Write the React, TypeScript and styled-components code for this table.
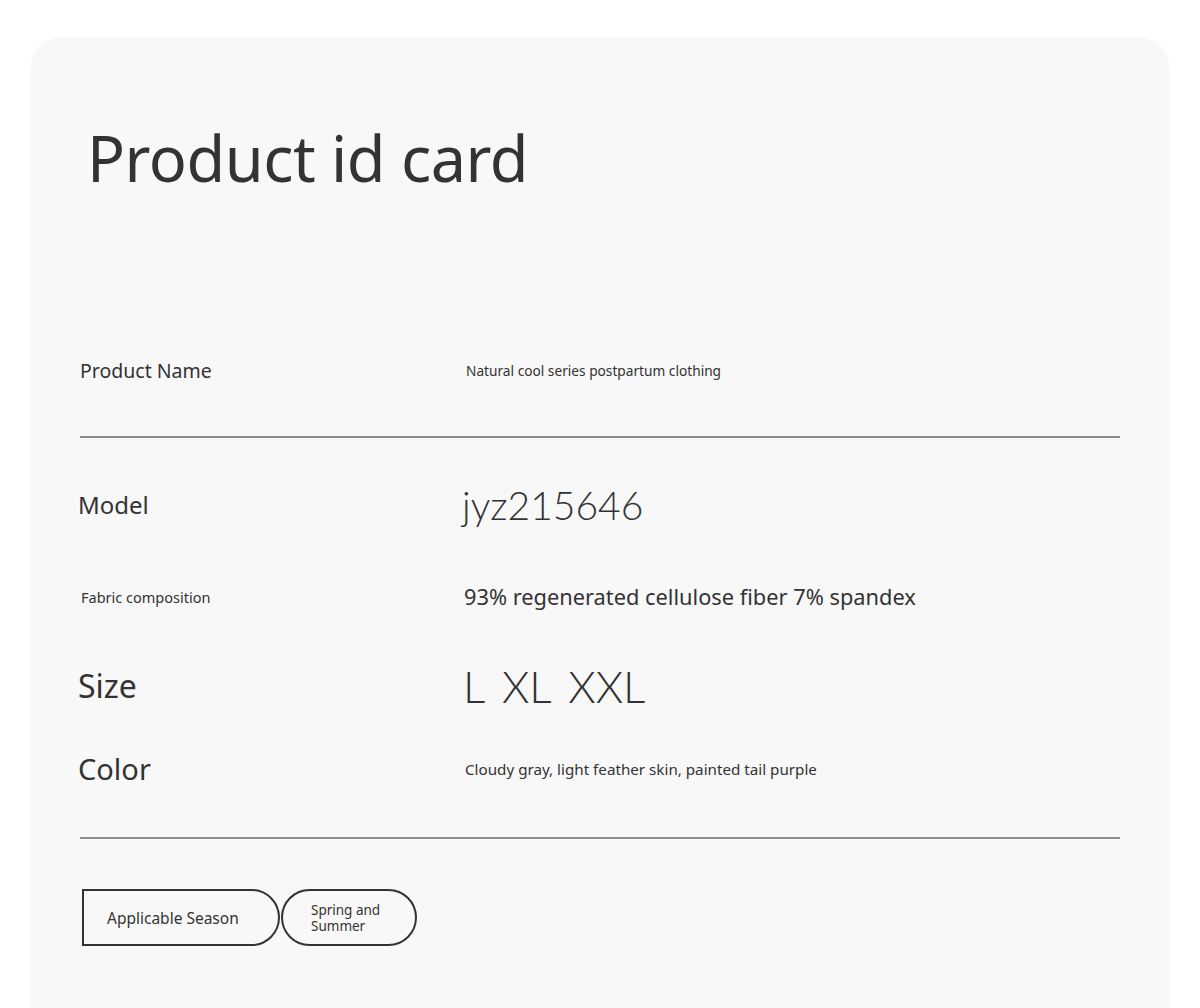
import React from "react";
import styled, { createGlobalStyle } from "styled-components";

const Global = createGlobalStyle`
  html, body { margin: 0; padding: 0; background: #ffffff; }
  body { font-family: "Noto Sans", "Open Sans", sans-serif; color: #333333; }
  * { box-sizing: border-box; }
`;

const Page = styled.div`
  padding: 37px 30px 0 30px;
  height: 1008px;
  overflow: hidden;
`;

const Card = styled.section`
  background: #f8f8f8;
  border-radius: 32px 32px 0 0;
  padding: 80px 50px 80px 50px;
  min-height: 1100px;
`;

const Title = styled.h1`
  margin: 0 0 0 7px;
  font-family: "Noto Sans", sans-serif;
  font-weight: 400;
  font-size: 63px;
  line-height: 82px;
  color: #333333;
  letter-spacing: -0.5px;
`;

const Rows = styled.div`
  margin-top: 157px;
  display: flex;
  flex-direction: column;
`;

const Row = styled.div<{ $h: number; $top?: boolean }>`
  display: grid;
  grid-template-columns: 384px 1fr;
  align-items: ${(p) => (p.$top ? "start" : "center")};
  height: ${(p) => p.$h}px;
  line-height: 30px;
`;

const Label = styled.div<{ $size: number; $dx?: number }>`
  font-size: ${(p) => p.$size}px;
  margin-left: ${(p) => p.$dx ?? 0}px;
  color: #333333;
  white-space: nowrap;
`;

const Value = styled.div<{ $size: number; $dx?: number; $thin?: boolean }>`
  font-size: ${(p) => p.$size}px;
  margin-left: ${(p) => p.$dx ?? 0}px;
  font-family: ${(p) => (p.$thin ? '"Lato", "Open Sans", sans-serif' : '"Noto Sans", sans-serif')};
  font-weight: ${(p) => (p.$thin ? 300 : 400)};
  line-height: ${(p) => (p.$thin ? "50px" : "30px")};
  color: #333333;
  white-space: nowrap;
`;

const Sizes = styled(Value)`
  word-spacing: 6px;
`;

const Divider = styled.hr`
  border: none;
  height: 2px;
  background: #8c8c8c;
  margin: 0;
`;

const Tags = styled.div`
  display: flex;
  align-items: center;
  gap: 1px;
  margin: 50px 0 0 2px;
`;

const Tag = styled.div<{ $pill?: boolean; $w: number }>`
  width: ${(p) => p.$w}px;
  height: 57px;
  border: 2px solid #333333;
  border-radius: ${(p) => (p.$pill ? "29px" : "0 29px 29px 0")};
  display: flex;
  align-items: center;
  padding-left: ${(p) => (p.$pill ? 28 : 23)}px;
  font-size: ${(p) => (p.$pill ? 13.5 : 15.5)}px;
  line-height: ${(p) => (p.$pill ? 16 : 20)}px;
  color: #333333;
`;

export default function App() {
  return (
    <>
      <Global />
      <Page>
        <Card>
          <Title>Product id card</Title>
          <Rows>
            <Row $h={80} $top>
              <Label $size={19.5}>Product Name</Label>
              <Value $size={13.7} $dx={2}>Natural cool series postpartum clothing</Value>
            </Row>
            <Divider />
            <Row $h={134}>
              <Label $size={24} $dx={-2}>Model</Label>
              <Value $size={39} $thin $dx={-2}>jyz215646</Value>
            </Row>
            <Row $h={50}>
              <Label $size={14.5} $dx={1}>Fabric composition</Label>
              <Value $size={21.8}>93% regenerated cellulose fiber 7% spandex</Value>
            </Row>
            <Row $h={128}>
              <Label $size={32} $dx={-2}>Size</Label>
              <Sizes $size={44} $thin $dx={-1}>L XL XXL</Sizes>
            </Row>
            <Row $h={38}>
              <Label $size={29} $dx={-2}>Color</Label>
              <Value $size={15.2} $dx={1}>Cloudy gray, light feather skin, painted tail purple</Value>
            </Row>
            <Row $h={49} />
            <Divider />
          </Rows>
          <Tags>
            <Tag $w={198}>Applicable Season</Tag>
            <Tag $pill $w={136}>Spring and<br />Summer</Tag>
          </Tags>
        </Card>
      </Page>
    </>
  );
}
